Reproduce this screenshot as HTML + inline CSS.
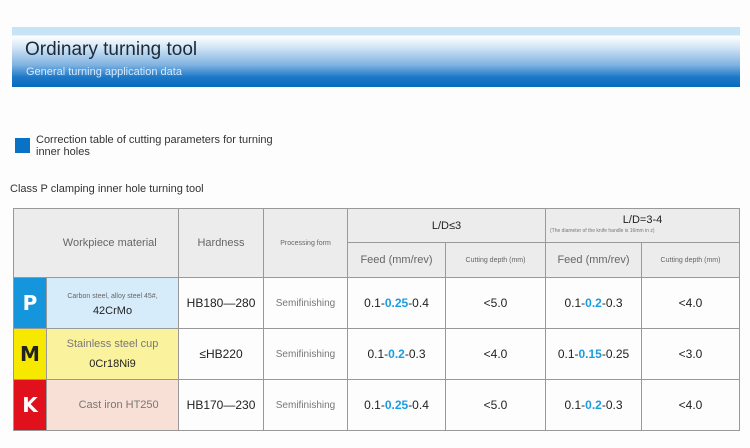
<!DOCTYPE html><html><head><style>
*{margin:0;padding:0;box-sizing:border-box}
body{width:750px;height:448px;background:#fdfdfd;font-family:"Liberation Sans",sans-serif;position:relative;overflow:hidden;color:#333}
.ban{position:absolute;left:12px;top:27px;width:728px;height:60px;background:linear-gradient(#c6e4f6 0,#c6e4f6 8px,#fff 9px,#d4e6f6 20px,#7fb2e0 38px,#1d79c8 50px,#066bbd 60px)}
.t1{position:absolute;left:25px;top:39px;font-size:19px;color:#1c2a3a}
.t2{position:absolute;left:26px;top:66px;font-size:11px;color:#d6eaff}
.sq{position:absolute;left:15px;top:138px;width:15px;height:15px;background:#0a72c4}
.c{position:absolute;left:36px;top:134px;font-size:11px;line-height:12px;color:#333}
.p{position:absolute;left:10px;top:183px;font-size:11px;color:#333}
table{position:absolute;left:13px;top:208px;border-collapse:collapse;width:726px;border:1.5px solid #888;table-layout:fixed}
td{border:1px solid #999;text-align:center;font-size:12px;color:#222}
.h{background:#ececec;color:#666}
.b{color:#1a9de0;font-weight:bold}
.L{color:#fff;font-weight:bold;font-size:20px;font-family:"DejaVu Sans",sans-serif}
</style></head><body>
<div class="ban"></div>
<div class="t1">Ordinary turning tool</div>
<div class="t2">General turning application data</div>
<div class="sq"></div>
<div class="c">Correction table of cutting parameters for turning<br>inner holes</div>
<div class="p">Class P clamping inner hole turning tool</div>
<table>
<colgroup><col style="width:33px"><col style="width:132px"><col style="width:85px"><col style="width:84px"><col style="width:98px"><col style="width:100px"><col style="width:96px"><col style="width:98px"></colgroup>
<tr style="height:34px"><td class="h" colspan="2" rowspan="2" style="font-size:11px">&nbsp;&nbsp;&nbsp;&nbsp;&nbsp;&nbsp;&nbsp;&nbsp;&nbsp;Workpiece material</td><td class="h" rowspan="2" style="font-size:11px">Hardness</td><td class="h" rowspan="2" style="font-size:7px">Processing form</td><td class="h" colspan="2" style="color:#222;font-size:11px">L/D≤3</td><td class="h" colspan="2" style="color:#222;font-size:11px;line-height:11px">L/D=3-4<br><span style="font-size:5px;color:#777;display:block;text-align:left;padding-left:4px">(The diameter of the knife handle is 16mm in z)</span></td></tr>
<tr style="height:35px"><td class="h" style="font-size:11px">Feed (mm/rev)</td><td class="h" style="font-size:7px">Cutting depth (mm)</td><td class="h" style="font-size:11px">Feed (mm/rev)</td><td class="h" style="font-size:7px">Cutting depth (mm)</td></tr>
<tr style="height:51px"><td class="L" style="background:#1495dc">P</td><td style="background:#d6ecfa;font-size:11px;line-height:14px"><span style="font-size:7px;color:#666">Carbon steel, alloy steel 45#,</span><br>42CrMo</td><td>HB180—280</td><td style="font-size:10px;color:#777">Semifinishing</td><td>0.1-<span class="b">0.25</span>-0.4</td><td>&lt;5.0</td><td>0.1-<span class="b">0.2</span>-0.3</td><td>&lt;4.0</td></tr>
<tr style="height:51px"><td class="L" style="background:#f7e800;color:#222">M</td><td style="background:#fbf29e;font-size:11px;line-height:20px"><span style="color:#777">Stainless steel cup</span><br>0Cr18Ni9</td><td>≤HB220</td><td style="font-size:10px;color:#777">Semifinishing</td><td>0.1-<span class="b">0.2</span>-0.3</td><td>&lt;4.0</td><td>0.1-<span class="b">0.15</span>-0.25</td><td>&lt;3.0</td></tr>
<tr style="height:51px"><td class="L" style="background:#e0101c">K</td><td style="background:#f8e0d6;font-size:11px;color:#777">&nbsp;&nbsp;&nbsp;&nbsp;Cast iron HT250</td><td>HB170—230</td><td style="font-size:10px;color:#777">Semifinishing</td><td>0.1-<span class="b">0.25</span>-0.4</td><td>&lt;5.0</td><td>0.1-<span class="b">0.2</span>-0.3</td><td>&lt;4.0</td></tr>
</table>
</body></html>
